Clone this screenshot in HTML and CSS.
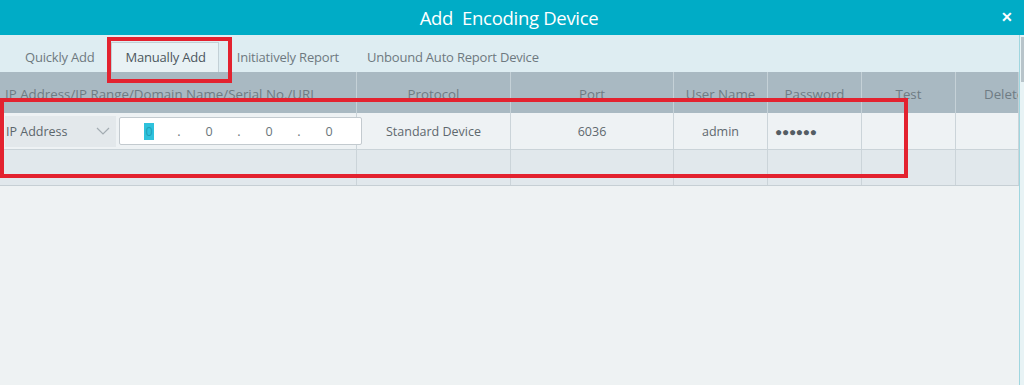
FILE: index.html
```html
<!DOCTYPE html>
<html lang="en">
<head>
    <meta charset="UTF-8">
    <title>Add Encoding Device</title>
    <link rel="stylesheet" href="styles.css">
</head>
<body>
    <div id="dialog">
        <div id="title-bar">
            <h1>Add&nbsp; Encoding Device</h1>
            <span class="close">✕</span>
        </div>
        <div id="tabs">
            <div class="tab">Quickly Add</div>
            <div class="tab active">Manually Add</div>
            <div class="tab">Initiatively Report</div>
            <div class="tab">Unbound Auto Report Device</div>
        </div>
        <div id="device-table">
            <div class="row head">
                <div class="cell">IP Address/IP Range/Domain Name/Serial No./URL</div>
                <div class="cell">Protocol</div>
                <div class="cell">Port</div>
                <div class="cell">User Name</div>
                <div class="cell">Password</div>
                <div class="cell">Test</div>
                <div class="cell clip">Delete</div>
            </div>
            <div class="row odd">
                <div class="cell addr">
                    <div class="select">IP Address
                        <svg width="14" height="8" viewBox="0 0 14 8"><path d="M1 1 L7 7 L13 1" fill="none" stroke="#a3acb2" stroke-width="1.2"/></svg>
                    </div>
                    <div class="ip-input">
                        <span class="seg"><span class="sel">0</span></span><span class="dot">.</span><span class="seg">0</span><span class="dot">.</span><span class="seg">0</span><span class="dot">.</span><span class="seg">0</span>
                    </div>
                </div>
                <div class="cell">Standard Device</div>
                <div class="cell">6036</div>
                <div class="cell">admin</div>
                <div class="cell pwd">●●●●●●</div>
                <div class="cell"></div>
                <div class="cell"></div>
            </div>
            <div class="row even">
                <div class="cell"></div>
                <div class="cell"></div>
                <div class="cell"></div>
                <div class="cell"></div>
                <div class="cell"></div>
                <div class="cell"></div>
                <div class="cell"></div>
            </div>
        </div>
        <div id="scrollbar"><div class="thumb"></div></div>
        <div class="mark mark-tab"></div>
        <div class="mark mark-row"></div>
    </div>
</body>
</html>
```

FILE: styles.css
```css
body {
    margin: 0;
    font-family: 'Open Sans', 'Noto Sans', sans-serif;
    background-color: #eef2f3;
}
#dialog {
    position: relative;
    width: 1024px;
    height: 385px;
    overflow: hidden;
    background-color: #eef2f3;
}
#title-bar {
    height: 35px;
    background-color: #00acc6;
    display: flex;
    justify-content: center;
    align-items: center;
    color: white;
}
h1 {
    margin: 0;
    font-size: 18.5px;
    font-weight: normal;
    letter-spacing: -0.3px;
    transform: translateX(-3px);
}
.close {
    position: absolute;
    right: 11px;
    top: 7px;
    font-size: 14px;
    font-weight: bold;
}
#tabs {
    height: 37px;
    display: flex;
    align-items: flex-end;
    background-color: #deedf2;
    padding-left: 11px;
    box-sizing: border-box;
}
.tab {
    height: 29px;
    line-height: 29px;
    padding: 0 16px 0 14px;
    font-size: 13px;
    color: #6e7980;
    letter-spacing: -0.2px;
}
.tab.active {
    background-color: #e9f2f5;
    border: 1px solid #c3d0d6;
    border-bottom: none;
    color: #4c575e;
    padding: 0 12px 0 14px;
}
.tab:nth-child(3) {
    padding: 0 14px 0 18px;
}
.tab:nth-child(4) {
    padding-left: 14px;
}
#device-table {
    width: 1019px;
}
.row {
    display: grid;
    grid-template-columns: 357px 154px 163px 94px 94px 94px 63px;
}
.row.head {
    height: 41px;
    background-color: #a9b9c2;
}
.row.odd {
    height: 36px;
    background-color: #eef2f4;
    border-bottom: 1px solid #cad3d8;
}
.row.even {
    height: 35px;
    background-color: #e1e8ec;
    border-bottom: 1px solid #c6cfd4;
}
.cell {
    display: flex;
    justify-content: center;
    align-items: center;
    font-size: 12.5px;
    color: #5e686e;
    border-right: 1px solid #cbd4d9;
    white-space: nowrap;
    overflow: hidden;
}
.head .cell {
    color: #6f7c84;
    font-size: 13.3px;
    border-right-color: #c5d1d7;
    align-items: flex-start;
    padding-top: 13px;
}
.head .cell:first-child {
    justify-content: flex-start;
    padding-left: 5px;
}
.head .cell.clip {
    justify-content: flex-start;
    padding-left: 28px;
}
.cell.addr {
    justify-content: flex-start;
    gap: 3px;
    padding-left: 5px;
    overflow: visible;
    position: relative;
    z-index: 1;
}
.select {
    flex-shrink: 0;
    width: 111px;
    height: 31px;
    box-sizing: border-box;
    background-color: #e3e8eb;
    display: flex;
    align-items: center;
    justify-content: space-between;
    padding: 0 6px 0 1px;
    color: #5c666c;
}
.ip-input {
    flex-shrink: 0;
    width: 243px;
    height: 28px;
    box-sizing: border-box;
    background-color: white;
    border: 1px solid #c3cacf;
    border-radius: 2px;
    display: flex;
    align-items: center;
    padding-left: 14px;
    color: #6b757b;
}
.seg, .dot {
    width: 30px;
    text-align: center;
}
.sel {
    background-color: #2fc2dc;
    color: #1d9fb6;
    padding: 0 1px;
}
.pwd {
    justify-content: flex-start;
    padding-left: 7px;
    font-size: 12px;
    letter-spacing: -0.3px;
    color: #555e64;
}
#scrollbar {
    position: absolute;
    top: 35px;
    right: 0;
    width: 4px;
    height: 350px;
    background-color: #e8f3f5;
    border-left: 1px solid #9fd6df;
}
.thumb {
    margin-top: 2px;
    margin-left: 1px;
    width: 3px;
    height: 45px;
    background-color: #b8c4ca;
}
.mark {
    position: absolute;
    border: 4px solid #e3222f;
    box-sizing: border-box;
    z-index: 2;
}
.mark-tab {
    left: 107px;
    top: 37px;
    width: 125px;
    height: 46px;
}
.mark-row {
    left: 0;
    top: 98px;
    width: 908px;
    height: 80px;
}
```
